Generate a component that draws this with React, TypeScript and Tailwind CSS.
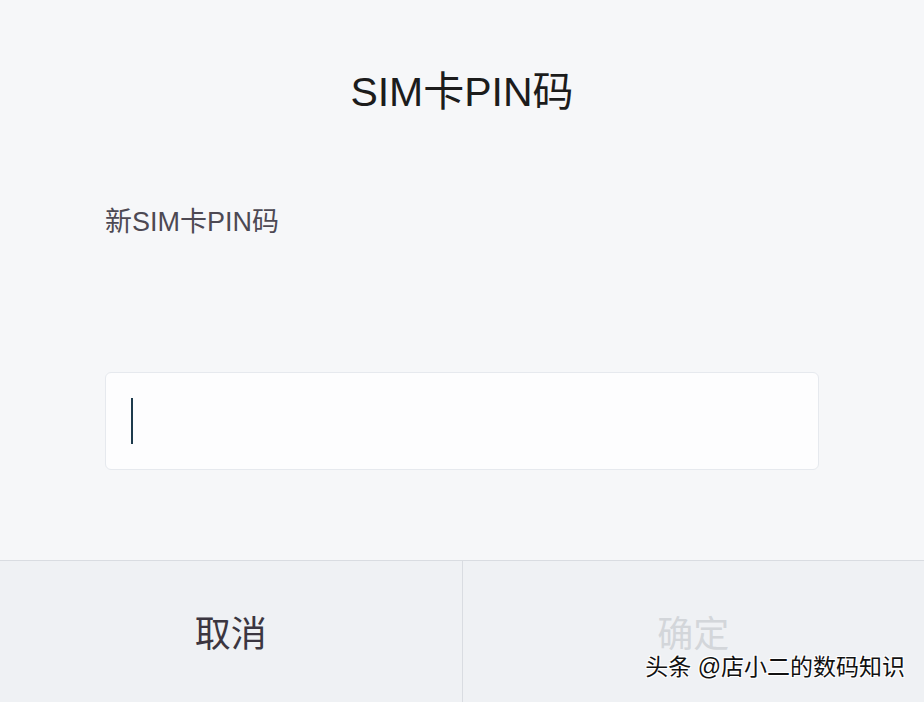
export default function App() {
  const font = { fontFamily: '"Liberation Sans", "Noto Sans CJK SC", sans-serif' };
  return (
    <div className="flex h-[702px] w-[924px] flex-col bg-[#f6f7f9] text-[#222]" style={font}>
      <div className="flex h-[560px] flex-col px-[105px]">
        <h1 className="mt-[64px] text-center text-[41px] leading-[56px] font-normal text-[#1c1c1c]">SIM卡PIN码</h1>
        <p className="mt-[86px] text-[27px] leading-[32px] text-[#4d4953]">新SIM卡PIN码</p>
        <div className="mt-[134px] flex h-[98px] w-[714px] items-center rounded-[6px] border border-[#e6e9ee] bg-[#fdfdfe] px-[25px]">
          <span className="h-[46px] w-[2px] bg-[#1d3a4c]" />
        </div>
      </div>
      <div className="relative flex flex-1 border-t border-[#d9dce1] bg-[#eff1f4]">
        <button className="flex flex-1 items-center justify-center pt-[6px] text-[36px] text-[#3b3640]">取消</button>
        <div className="w-px bg-[#d9dce1]" />
        <button className="flex flex-1 items-center justify-center pt-[6px] text-[36px] text-[#d3d6da]">确定</button>
        <span
          className="absolute right-[19px] bottom-[20px] text-[23px] leading-[30px] text-[#111]"
          style={{ textShadow: "1px 1px 0 #fff, -1px -1px 0 #fff, 1px -1px 0 #fff, -1px 1px 0 #fff" }}
        >
          头条 @店小二的数码知识
        </span>
      </div>
    </div>
  );
}
